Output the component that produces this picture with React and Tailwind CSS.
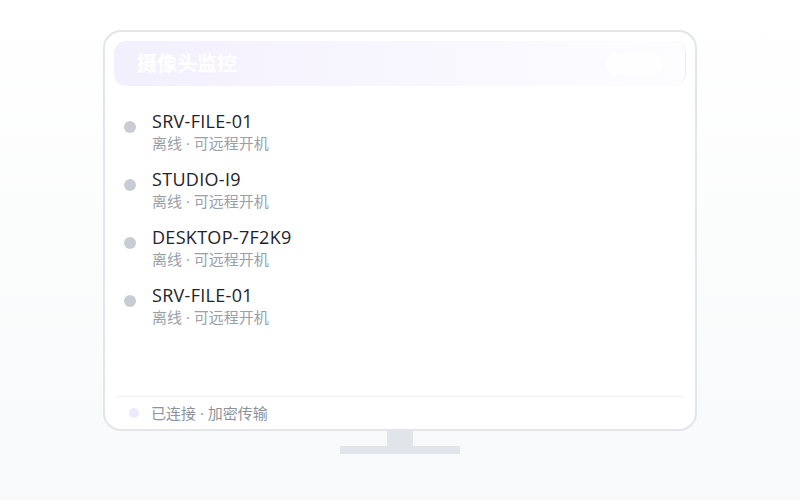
const devices = [
  { name: "SRV-FILE-01", status: "离线 · 可远程开机" },
  { name: "STUDIO-I9", status: "离线 · 可远程开机" },
  { name: "DESKTOP-7F2K9", status: "离线 · 可远程开机" },
  { name: "SRV-FILE-01", status: "离线 · 可远程开机" },
];

function DeviceRow({ device }) {
  return (
    <div className="flex items-start gap-[16px] h-[58px]">
      <div className="w-3 h-3 rounded-full bg-[#c9ccd4] flex-shrink-0 mt-[11px]" />
      <div className="flex flex-col">
        <span className="text-[18px] leading-[23px] tracking-[0.3px] text-[#1f2329]">{device.name}</span>
        <span className="text-[15px] leading-[21px] text-[#9aa0a8]">{device.status}</span>
      </div>
    </div>
  );
}

export default function App() {
  return (
    <div
      className="w-[800px] h-[500px] bg-gradient-to-b from-white to-[#f8f9fa] flex flex-col items-center pt-[30px]"
      style={{ fontFamily: '"Open Sans", "Noto Sans CJK SC", sans-serif' }}
    >
      {/* Screen */}
      <div className="w-[594px] h-[401px] rounded-[18px] border-2 border-[#e2e5e9] bg-white flex flex-col p-[9px] pb-0">
        <div className="h-[45px] rounded-[12px] bg-gradient-to-r from-[#f3f0fe] via-[#f8f6fe] to-[#fdfdff] flex items-center justify-between px-[23px] border-r border-[#eeeef2]">
          <span className="text-[20px] font-bold text-white">摄像头监控</span>
          <span className="w-[56px] h-[22px] rounded-full bg-white/70" />
        </div>

        <div className="flex-1 flex flex-col pl-[10px] pt-[24px]">
          {devices.map((d, i) => (
            <DeviceRow key={i} device={d} />
          ))}
        </div>

        <div className="mx-[2px] border-t border-[#eef0f3] h-[33px] flex items-center gap-[12px] pl-[13px]">
          <div className="w-[10px] h-[10px] rounded-full bg-[#eeeafd]" />
          <span className="text-[15px] text-[#8d939b]">已连接 · 加密传输</span>
        </div>
      </div>

      {/* Stand */}
      <div className="w-[26px] h-[15px] bg-[#e1e5e9]" />
      <div className="w-[120px] h-[8px] bg-[#e1e5e9]" />
    </div>
  );
}
